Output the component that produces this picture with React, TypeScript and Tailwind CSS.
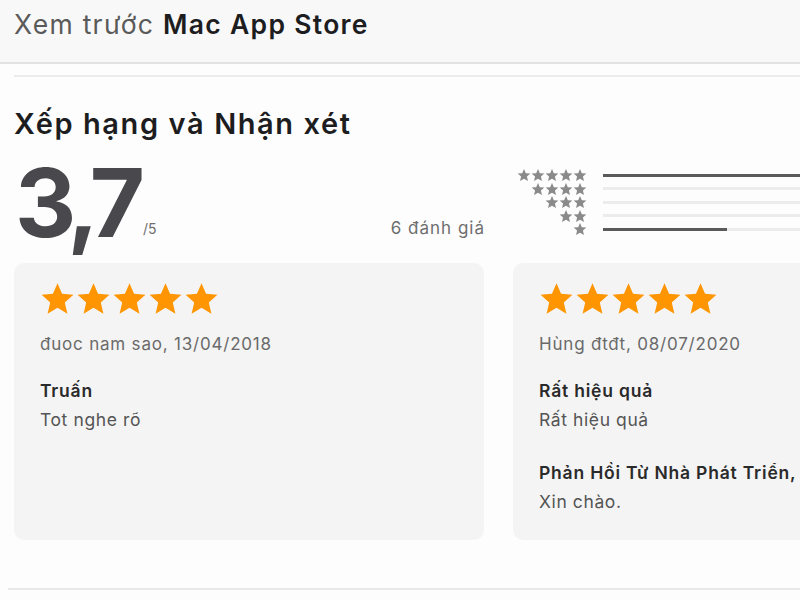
import React from "react";

const font = { fontFamily: "Inter, 'Liberation Sans', 'Noto Sans', sans-serif" };

function Star({ className }: { className?: string }) {
  return (
    <svg viewBox="0 0 24 24" className={className} fill="currentColor">
      <path d="M12 1.6l3.1 7.2 7.8.7-5.9 5.2 1.8 7.7L12 18.3l-6.8 4.1 1.8-7.7L1.1 9.5l7.8-.7z" />
    </svg>
  );
}

function Stars() {
  return (
    <div className="flex gap-[1px] text-[#ff9500]">
      {[0, 1, 2, 3, 4].map((i) => (
        <Star key={i} className="w-[35px] h-[35px]" />
      ))}
    </div>
  );
}

const histogram = [
  { stars: 5, pct: 100 },
  { stars: 4, pct: 0 },
  { stars: 3, pct: 0 },
  { stars: 2, pct: 0 },
  { stars: 1, pct: 63 },
];

const meta = "mt-[16px] text-[17px] leading-[24px] tracking-[0.8px] text-[#6a6a6a]";
const title = "text-[17.5px] leading-[24px] tracking-[0.8px] font-semibold text-[#2a2a2a] whitespace-nowrap";
const body = "mt-[5px] text-[17.5px] leading-[24px] tracking-[0.6px] text-[#555]";

export default function App() {
  return (
    <div className="w-[800px] h-[600px] overflow-hidden bg-[#fdfdfd] text-[#1d1d1f]" style={font}>
      <header className="h-[64px] border-b-2 border-[#e2e2e2] bg-[#f8f8f8] pl-[14px] pt-[8px]">
        <h1 className="text-[26.5px] leading-[32px] tracking-[1.3px] text-[#5a5a5a]">
          Xem trước <span className="font-semibold text-[#1d1d1f]">Mac App Store</span>
        </h1>
      </header>
      <div className="ml-[14px] mt-[11px] border-t-2 border-[#ececec]" />

      <section className="px-[14px]">
        <h2 className="mt-[30px] text-[29px] font-semibold leading-[34px] tracking-[1.6px] text-[#1d1d1f]">
          Xếp hạng và Nhận xét
        </h2>

        <div className="flex items-start mt-[20px] h-[96px]">
          <div className="flex items-end w-[471px]">
            <span className="text-[95px] font-bold leading-[84px] tracking-[-7px] text-[#48484d] ml-[1px]">3,7</span>
            <span className="text-[14px] text-[#6e6e6e] ml-[5px] mb-[6px]">/5</span>
            <span className="ml-auto text-[17px] tracking-[1px] text-[#6e6e6e] mb-[4px]">6 đánh giá</span>
          </div>
          <div className="flex flex-col ml-[30px] mr-[-14px] mt-[8px] gap-[1px] flex-1">
            {histogram.map((row) => (
              <div key={row.stars} className="flex items-center h-[12.5px]">
                <div className="w-[72px] flex justify-end text-[#8a8a8a]">
                  {Array.from({ length: row.stars }).map((_, i) => (
                    <Star key={i} className="w-[14px] h-[14px]" />
                  ))}
                </div>
                <div className="ml-[16px] flex-1 h-[3px] bg-[#ececec]">
                  <div className="h-full bg-[#5a5a5a]" style={{ width: `${row.pct}%` }} />
                </div>
              </div>
            ))}
          </div>
        </div>

        <div className="flex gap-[29px] mt-[6px]">
          <article className="w-[470px] h-[277px] shrink-0 rounded-[10px] bg-[#f4f4f4] pl-[26px] pt-[18px]">
            <Stars />
            <p className={meta}>đuoc nam sao, 13/04/2018</p>
            <p className={`mt-[23px] ${title}`}>Truấn</p>
            <p className={body}>Tot nghe rõ</p>
          </article>
          <article className="w-[470px] h-[277px] shrink-0 rounded-[10px] bg-[#f4f4f4] pl-[26px] pt-[18px]">
            <Stars />
            <p className={meta}>Hùng đtđt, 08/07/2020</p>
            <p className={`mt-[23px] ${title}`}>Rất hiệu quả</p>
            <p className={body}>Rất hiệu quả</p>
            <p className={`mt-[29px] ${title}`}>Phản Hồi Từ Nhà Phát Triển,</p>
            <p className={body}>Xin chào.</p>
          </article>
        </div>
      </section>

      <div className="ml-[8px] mt-[48px] border-t-2 border-[#e8e8e8]" />
    </div>
  );
}
